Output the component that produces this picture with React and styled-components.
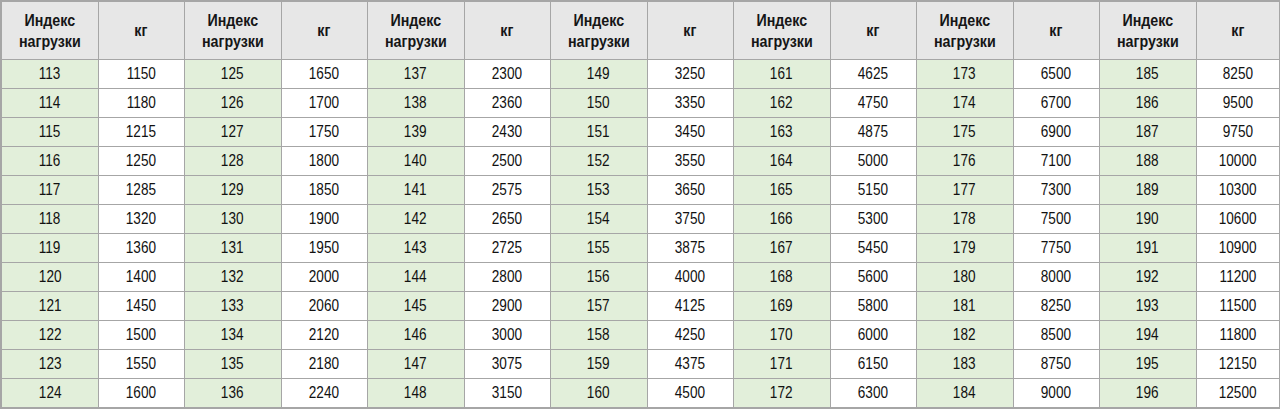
import React from "react";
import styled, { createGlobalStyle } from "styled-components";

const GlobalStyle = createGlobalStyle`
  html, body {
    margin: 0;
    padding: 0;
    background: #ffffff;
  }
  body {
    font-family: "Liberation Sans", Arial, sans-serif;
  }
`;

const START = 113;
const ROWS = 12;
const GROUPS = 7;

// kg values per load index, 113..196
const KG = [
  1150, 1180, 1215, 1250, 1285, 1320, 1360, 1400, 1450, 1500, 1550, 1600,
  1650, 1700, 1750, 1800, 1850, 1900, 1950, 2000, 2060, 2120, 2180, 2240,
  2300, 2360, 2430, 2500, 2575, 2650, 2725, 2800, 2900, 3000, 3075, 3150,
  3250, 3350, 3450, 3550, 3650, 3750, 3875, 4000, 4125, 4250, 4375, 4500,
  4625, 4750, 4875, 5000, 5150, 5300, 5450, 5600, 5800, 6000, 6150, 6300,
  6500, 6700, 6900, 7100, 7300, 7500, 7750, 8000, 8250, 8500, 8750, 9000,
  8250, 9500, 9750, 10000, 10300, 10600, 10900, 11200, 11500, 11800, 12150,
  12500,
];

const Table = styled.table`
  width: 1280px;
  border-collapse: collapse;
  table-layout: fixed;
  border: 2px solid #a6a6a6;
`;

const Col = styled.col`
  width: ${(p) => p.$w}px;
`;

const HeadCell = styled.th`
  height: 57px;
  padding: 0;
  background: #e7e7e7;
  border: 1px solid #a6a6a6;
  text-align: center;
  vertical-align: middle;
  font-weight: bold;
  font-size: 17px;
  line-height: 21px;
  color: #161616;
`;

const Cell = styled.td`
  height: 28px;
  padding: 0;
  background: ${(p) => (p.$index ? "#e2efda" : "#ffffff")};
  border: 1px solid #a6a6a6;
  text-align: center;
  vertical-align: middle;
  font-size: 17px;
  color: #111111;
`;

const Squeeze = styled.span`
  display: inline-block;
  transform: scaleX(${(p) => p.$x || 0.8});
  transform-origin: center;
  white-space: nowrap;
`;

const groups = Array.from({ length: GROUPS }, (_, g) => g);
const rows = Array.from({ length: ROWS }, (_, r) => r);

export default function App() {
  return (
    <>
      <GlobalStyle />
      <Table>
        <colgroup>
          {groups.map((g) => (
            <React.Fragment key={g}>
              <Col $w={97} />
              <Col $w={g === GROUPS - 1 ? 84 : 86} />
            </React.Fragment>
          ))}
        </colgroup>
        <thead>
          <tr>
            {groups.map((g) => (
              <React.Fragment key={g}>
                <HeadCell>
                  <Squeeze $x={0.84}>
                    Индекс
                    <br />
                    нагрузки
                  </Squeeze>
                </HeadCell>
                <HeadCell>
                  <Squeeze $x={0.84}>кг</Squeeze>
                </HeadCell>
              </React.Fragment>
            ))}
          </tr>
        </thead>
        <tbody>
          {rows.map((r) => (
            <tr key={r}>
              {groups.map((g) => {
                const i = g * ROWS + r;
                return (
                  <React.Fragment key={g}>
                    <Cell $index>
                      <Squeeze>{START + i}</Squeeze>
                    </Cell>
                    <Cell>
                      <Squeeze>{KG[i]}</Squeeze>
                    </Cell>
                  </React.Fragment>
                );
              })}
            </tr>
          ))}
        </tbody>
      </Table>
    </>
  );
}
